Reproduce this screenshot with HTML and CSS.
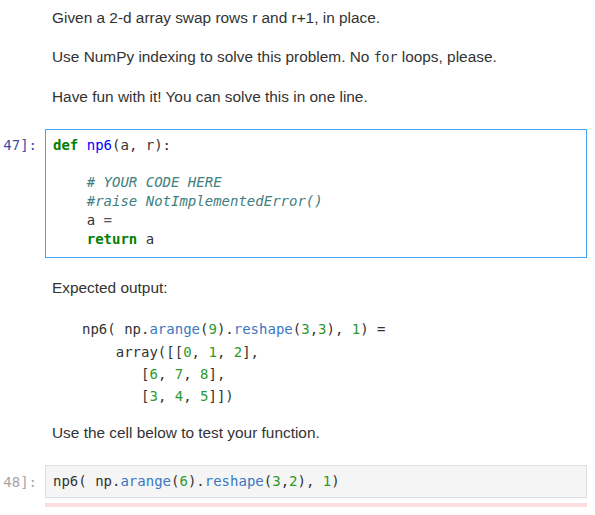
FILE: index.html
```html
<!DOCTYPE html>
<html>
<head>
<meta charset="utf-8">
<link rel="stylesheet" href="styles.css">
</head>
<body>
<div class="nb">
  <div class="cell md first">
    <div class="prompt"></div>
    <div class="content">
      <p>Given a 2-d array swap rows r and r+1, in place.</p>
      <p>Use NumPy indexing to solve this problem. No <code>for</code> loops, please.</p>
      <p>Have fun with it! You can solve this in one line.</p>
    </div>
  </div>

  <div class="cell code c1">
    <div class="prompt sel"><span>47]:</span></div>
    <div class="input selected">
      <div class="ln"><span class="kw">def</span> <span class="fn">np6</span>(a, r):</div>
      <div class="ln"> </div>
      <div class="ln">    <span class="cm"># YOUR CODE HERE</span></div>
      <div class="ln">    <span class="cm">#raise NotImplementedError()</span></div>
      <div class="ln">    a <span class="op">=</span></div>
      <div class="ln">    <span class="kw">return</span> a</div>
    </div>
  </div>

  <div class="cell md second">
    <div class="prompt"></div>
    <div class="content">
      <p>Expected output:</p>
      <div class="hl">
        <div class="hln">np6( np.<span class="bl">arange</span>(<span class="nu">9</span>).<span class="bl">reshape</span>(<span class="nu">3</span>,<span class="nu">3</span>), <span class="nu">1</span>) =</div>
        <div class="hln">    array([[<span class="nu">0</span>, <span class="nu">1</span>, <span class="nu">2</span>],</div>
        <div class="hln">       [<span class="nu">6</span>, <span class="nu">7</span>, <span class="nu">8</span>],</div>
        <div class="hln">       [<span class="nu">3</span>, <span class="nu">4</span>, <span class="nu">5</span>]])</div>
      </div>
      <p class="last">Use the cell below to test your function.</p>
    </div>
  </div>

  <div class="cell code c2">
    <div class="prompt dim"><span>48]:</span></div>
    <div class="col">
      <div class="input plain">
        <div class="ln">np6( np.<span class="bl">arange</span>(<span class="nu">6</span>).<span class="bl">reshape</span>(<span class="nu">3</span>,<span class="nu">2</span>), <span class="nu">1</span>)</div>
      </div>
      <div class="err"></div>
    </div>
  </div>
</div>
</body>
</html>
```

FILE: styles.css
```css
html, body {
  margin: 0;
  padding: 0;
  background: #ffffff;
}

.nb {
  width: 595px;
  overflow: hidden;
}

.cell {
  display: flex;
  align-items: flex-start;
}

.prompt {
  flex: 0 0 37px;
  width: 37px;
  margin-right: 8px;
  display: flex;
  justify-content: flex-end;
  font-family: "DejaVu Sans Mono", monospace;
  font-size: 14px;
  line-height: 18.7px;
  white-space: nowrap;
  overflow: hidden;
}

.prompt.sel {
  color: #3c4ea8;
  padding-top: 7px;
}

.prompt.dim {
  color: #a6a6a6;
  padding-top: 8px;
}

.content {
  padding-left: 7px;
  color: #333333;
  font-family: "Liberation Sans", Arial, sans-serif;
  font-size: 15.4px;
}

.content p {
  margin: 0 0 19px 0;
  line-height: 20px;
}

.content p.last {
  margin-bottom: 0;
}

.content code {
  font-family: "DejaVu Sans Mono", monospace;
  font-size: 13.2px;
}

.md.first {
  padding-top: 8px;
}

.md.first .content p:last-child {
  margin-bottom: 0;
}

.c1 {
  margin-top: 22px;
}

.input {
  flex: 0 0 542px;
  width: 542px;
  box-sizing: border-box;
  font-family: "DejaVu Sans Mono", monospace;
  font-size: 14px;
  color: #333333;
}

.ln {
  white-space: pre;
  line-height: 18.7px;
  padding-left: 7px;
}

.input.selected {
  border: 1px solid #42a5f5;
  padding: 6px 0 9px 0;
}

.second {
  margin-top: 20px;
}

.second .content p:first-child {
  margin-bottom: 20px;
}

.hl {
  margin: 0 0 15px 30px;
  font-family: "DejaVu Sans Mono", monospace;
  font-size: 14px;
  color: #333333;
}

.hln {
  white-space: pre;
  line-height: 22.4px;
}

.c2 {
  margin-top: 22px;
}

.col {
  flex: 0 0 542px;
  width: 542px;
}

.input.plain {
  width: 542px;
  border: 1px solid #e0e0e0;
  background: #f5f5f5;
  padding: 6px 0 6px 0;
}

.err {
  margin-top: 5px;
  height: 4px;
  background: #fddede;
}

.kw {
  color: #008000;
  font-weight: bold;
}

.fn {
  color: #0000ff;
}

.cm {
  color: #408080;
  font-style: italic;
}

.op {
  color: #555555;
}

.bl {
  color: #3a78c3;
}

.nu {
  color: #2d9a2d;
}
```
